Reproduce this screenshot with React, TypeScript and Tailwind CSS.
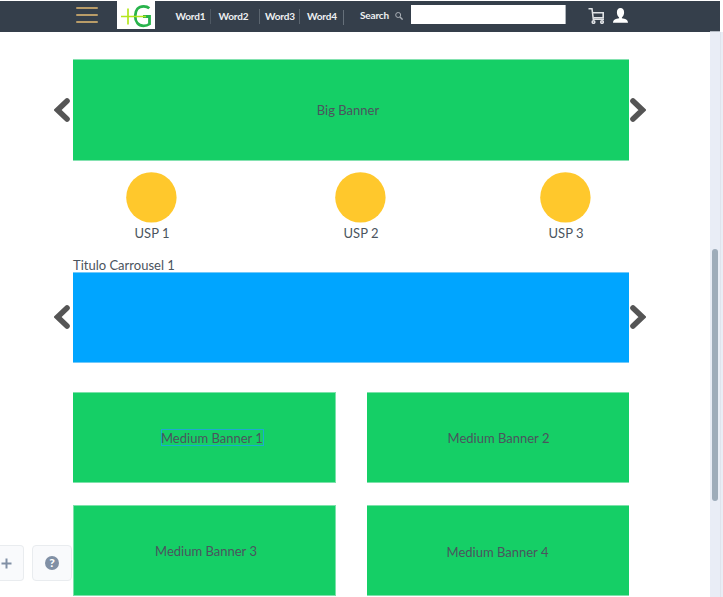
import React from "react";

function Chevron({ flip = false }: { flip?: boolean }) {
  return (
    <svg className={flip ? "mb-px h-6 w-4 shrink-0 rotate-180" : "mb-px h-6 w-4 shrink-0"} viewBox="0 0 16 24" fill="none">
      <path d="M13 3 3.600 12l9.400 9" stroke="#555555" strokeWidth="5.600" strokeLinecap="round" strokeLinejoin="miter" />
    </svg>
  );
}

function Carousel({ children, className }: { children?: React.ReactNode; className: string }) {
  return (
    <div className="ml-[54px] flex w-[592px] items-center">
      <Chevron />
      <div className={"mr-px ml-[3px] flex w-[556px] items-center justify-center border-y " + className}>{children}</div>
      <Chevron flip />
    </div>
  );
}

function Usp({ label, className }: { label: string; className: string }) {
  return (
    <div className={"flex w-[51px] flex-col items-center " + className}>
      <svg className="size-[51px]" viewBox="0 0 51 51">
        <circle cx="25.400" cy="25.400" r="25.200" fill="#ffc82c" />
      </svg>
      <span className="mt-px ml-px whitespace-nowrap leading-[18px]">{label}</span>
    </div>
  );
}

function Medium({ children, className }: { children: React.ReactNode; className: string }) {
  return (
    <div className={"flex items-center justify-center border-[#7ce2aa] bg-[#15cf66] " + className}>{children}</div>
  );
}

function Header() {
  return (
    <header className="mt-px flex h-[31px] w-[720px] shrink-0 bg-[#353f4b] text-[10px] font-bold tracking-[-0.15px] text-[#eef0f2]">
      <div className="mt-[6px] ml-[76px] flex h-[16px] w-[22px] flex-col justify-between">
        <div className="h-[2px] rounded bg-[#b99c68]" />
        <div className="h-[2px] rounded bg-[#b99c68]" />
        <div className="h-[2px] rounded bg-[#b99c68]" />
      </div>
      <div className="ml-[19px] h-7 w-[38px] bg-white">
        <svg className="h-7 w-[38px]" viewBox="0 0 38 28" fill="none">
          <path d="M32.300 7.200C30.700 5.800 28.700 5.300 26.700 5.300C21.300 5.300 18.200 9.200 18.200 15s3.200 9.800 8.300 9.800c2.300 0 4.400-.6 6-1.800v-7.500H26" stroke="#28b34b" strokeWidth="2.800" />
          <path d="M4 15.500H29M11 7.500v16" stroke="#b4e61e" strokeWidth="1.700" />
        </svg>
      </div>
      <nav className="flex h-[31px] items-center">
        <span className="ml-[20.500px] w-[35.500px]">Word1</span>
        <i className="-ml-px h-[15px] w-px bg-[#4e5863]" />
        <span className="ml-[7.500px] w-[40.500px]">Word2</span>
        <i className="h-[15px] w-px bg-[#5b656f]" />
        <span className="ml-[5px] w-[34px]">Word3</span>
        <i className="h-[15px] w-px bg-[#5b656f]" />
        <span className="ml-[7px] w-[36px]">Word4</span>
        <i className="mt-[2px] h-[15px] w-px bg-[#66707a]" />
        <span className="-mt-[2px] ml-[16px] w-[35px]">Search</span>
      </nav>
      <svg className="mt-[11px] size-2" viewBox="0 0 8 8" fill="none" stroke="#a9afb6" strokeWidth="1">
        <circle cx="3.200" cy="3" r="2.500" />
        <path d="m5 5 2.600 2.600" strokeWidth="1.400" />
      </svg>
      <div className="mt-[4px] ml-[8px] h-[19px] w-[155px] border-r border-[#aeb4bb] bg-white" />
      <svg className="mt-[7px] ml-[22px] h-4 w-4" viewBox="0 0 16 16" fill="none" stroke="#dfe2e5">
        <path d="M.5.800h3.500l1.300 10.400H16" strokeWidth="1.500" />
        <path d="M4.500 4.700H15.200v5H5.300" strokeWidth="1.600" />
        <circle cx="5.500" cy="14" r="1.300" strokeWidth="1.600" />
        <circle cx="14" cy="14" r="1.300" strokeWidth="1.600" />
      </svg>
      <svg className="mt-[7px] ml-[9px] h-[15px] w-[15px]" viewBox="0 0 15 15" fill="#fff">
        <path d="M7.500 0C5.200 0 3.900 1.700 3.900 4.300c0 2.400 1 4.300 2.200 5.100v.8C3 10.800 0 11.600 0 14.700h15c0-3.100-3-3.900-6.100-4.500v-.8c1.200-.8 2.200-2.700 2.200-5.100C11.100 1.700 9.800 0 7.500 0Z" />
      </svg>
    </header>
  );
}

function ToolButton({ children, className }: { children: React.ReactNode; className: string }) {
  return (
    <div className={"flex h-9 items-center justify-center border border-[#e9ecef] bg-[#f9fafc] " + className}>{children}</div>
  );
}

export default function App() {
  return (
    <div className="relative h-[597px] w-[723px] overflow-hidden bg-white font-['Lato',sans-serif] text-[13px] text-[#4b545e]">
      <div className="flex h-full flex-col">
        <Header />
        <div className="flex min-h-0 flex-1">
          <main className="w-[710px] shrink-0 pt-[27px]">
            <Carousel className="h-[102px] border-[#84e2b0] bg-[#15cf66]">
              <span className="mt-[2px] mr-[6px]">Big Banner</span>
            </Carousel>
            <div className="mt-[11px] flex pl-[126px]">
              <Usp label="USP 1" className="" />
              <Usp label="USP 2" className="ml-[158px]" />
              <Usp label="USP 3" className="ml-[154px]" />
            </div>
            <h2 className="mt-[15px] ml-[73px] h-[15px] leading-[17px]">Titulo Carrousel 1</h2>
            <Carousel className="h-[91px] border-[#71c9fa] bg-[#00a5ff]" />
            <div className="mt-[29px] ml-[73px] grid w-[556px] grid-cols-[263px_262px] grid-rows-[91px_91px] justify-between gap-y-[22px]">
              <Medium className="border-y border-r">
                <div className="ml-[17px] h-[17px] w-[103px] border border-solid border-[#1cabd0] leading-[16px] whitespace-nowrap">
                  <span className="-ml-px">Medium Banner 1</span>
                </div>
              </Medium>
              <Medium className="border-y">
                <span className="mt-[2px] ml-px">Medium Banner 2</span>
              </Medium>
              <Medium className="border">
                <span className="mt-[2px] ml-[3px]">Medium Banner 3</span>
              </Medium>
              <Medium className="border-y">
                <span className="mt-[4px] mr-px">Medium Banner 4</span>
              </Medium>
            </div>
          </main>
          <aside className="-mt-px w-[10px] border-t border-[#b3bac4] bg-[#e9edf6] pt-[217px] pl-[2px]">
            <div className="h-[252px] w-[6px] rounded-full bg-[#9eacba]" />
          </aside>
          <div className="w-[3px] border-l border-[#dfe3ec] bg-[#e9edf5]" />
        </div>
      </div>
      <div className="absolute bottom-4 left-0 flex gap-2">
        <ToolButton className="w-6 rounded-r-[4px] border-l-0 pr-[11px]">
          <svg className="size-[11px]" viewBox="0 0 11 11" stroke="#8190a5" strokeWidth="2">
            <path d="M.5 5.500h10M5.500.5v10" />
          </svg>
        </ToolButton>
        <ToolButton className="w-10 rounded-[4px]">
          <div className="flex size-[14px] items-center justify-center rounded-full bg-[#8190a5] text-[12px] leading-[14px] font-black text-white">?</div>
        </ToolButton>
      </div>
    </div>
  );
}
